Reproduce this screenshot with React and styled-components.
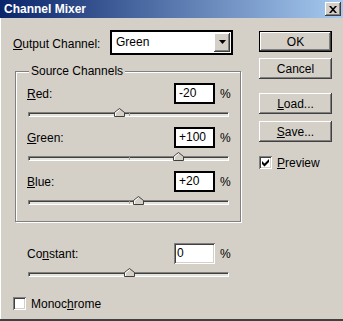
import React from 'react'
import styled, { createGlobalStyle } from 'styled-components'

const GlobalStyle = createGlobalStyle`
body{
    margin:0;
    font-family:"Liberation Sans", Arial, sans-serif;
    font-size:12px;
    color:#000;
}
`

const raised = `
box-shadow: inset -1px -1px #404040, inset 1px 1px #ffffff, inset -2px -2px #808080, inset 2px 2px #d4d0c8;
`
const sunken = `
box-shadow: inset 1px 1px #808080, inset -1px -1px #ffffff, inset 2px 2px #404040, inset -2px -2px #d4d0c8;
`

const channels = [
    { key: 'r', mnemonic: 'R', rest: 'ed:', value: -20 },
    { key: 'g', mnemonic: 'G', rest: 'reen:', value: 100 },
    { key: 'b', mnemonic: 'B', rest: 'lue:', value: 20 },
]

const fmt = v => (v > 0 ? '+' + v : String(v))

const Slider = ({ value }) => (
    <Track>
        <Tick />
        <Thumb style={{ left: `calc(${((value + 200) / 400) * 100}% - 5px)` }}>
            <svg width="11" height="9" viewBox="0 0 11 9">
                <path d="M0.5 8.5V4.5L5.5 0.5L10.5 4.5V8.5Z" fill="#d4d0c8" stroke="#404040" />
                <path d="M1.5 8V4.9L5.5 1.7" fill="none" stroke="#ffffff" />
            </svg>
        </Thumb>
    </Track>
)

const CheckBox = ({ checked }) => (
    <Box>
        {checked && (
            <svg width="9" height="9" viewBox="0 0 9 9">
                <path d="M1 3L3.5 5.5L8 1V4L3.5 8.5L1 6Z" fill="#000" />
            </svg>
        )}
    </Box>
)

export default () => {
    return (
        <>
            <GlobalStyle />
            <Window>
                <TitleBar>
                    <Title>Channel Mixer</Title>
                    <CloseButton>
                        <svg width="8" height="7" viewBox="0 0 8 7">
                            <path d="M0 0h2l2 2.2L6 0h2L5 3.5L8 7H6L4 4.8L2 7H0l3-3.5Z" fill="#000" />
                        </svg>
                    </CloseButton>
                </TitleBar>
                <Body>
                    <LeftCol>
                        <OutputRow>
                            <span><U>O</U>utput Channel:</span>
                            <Select>
                                <SelectText>Green</SelectText>
                                <DropButton>
                                    <svg width="7" height="4" viewBox="0 0 7 4">
                                        <path d="M0 0h7L3.5 4Z" fill="#000" />
                                    </svg>
                                </DropButton>
                            </Select>
                        </OutputRow>
                        <Group>
                            <Legend>Source Channels</Legend>
                            {channels.map(c => (
                                <Channel key={c.key}>
                                    <ValueRow>
                                        <Label><U>{c.mnemonic}</U>{c.rest}</Label>
                                        <NumberBox $strong>{fmt(c.value)}</NumberBox>
                                        <Percent>%</Percent>
                                    </ValueRow>
                                    <Slider value={c.value} />
                                </Channel>
                            ))}
                        </Group>
                        <ConstantBlock>
                            <ValueRow>
                                <Label>Co<U>n</U>stant:</Label>
                                <NumberBox>0</NumberBox>
                                <Percent>%</Percent>
                            </ValueRow>
                            <Slider value={0} />
                        </ConstantBlock>
                        <CheckRow $top={20}>
                            <CheckBox />
                            <span>Monoc<U>h</U>rome</span>
                        </CheckRow>
                    </LeftCol>
                    <RightCol>
                        <Button $default>OK</Button>
                        <Button $gap={6}>Cancel</Button>
                        <Button $gap={14}><U>L</U>oad...</Button>
                        <Button $gap={7}><U>S</U>ave...</Button>
                        <CheckRow $top={14}>
                            <CheckBox checked />
                            <span><U>P</U>review</span>
                        </CheckRow>
                    </RightCol>
                </Body>
            </Window>
        </>
    )
}

const Window = styled.div`
width:343px;
height:321px;
box-sizing:border-box;
background:#d4d0c8;
display:flex;
flex-direction:column;
border-bottom:2px solid #404040;
box-shadow: inset 1px 0 #ffffff;
`

const TitleBar = styled.div`
height:18px;
flex:none;
display:flex;
align-items:center;
justify-content:space-between;
padding:0 2px 0 4px;
background:linear-gradient(to right, #0a246a, #a6caf0);
`

const Title = styled.span`
color:#fff;
font-weight:bold;
font-size:12px;
`

const CloseButton = styled.div`
width:16px;
height:14px;
display:flex;
align-items:center;
justify-content:center;
background:#d4d0c8;
${raised}
`

const Body = styled.div`
display:flex;
flex:1;
`

const LeftCol = styled.div`
width:233px;
flex:none;
padding:12px 0 0 13px;
display:flex;
flex-direction:column;
`

const OutputRow = styled.div`
display:flex;
align-items:center;
justify-content:space-between;
height:24px;
width:220px;
span{ padding-top:3px; }
`

const Select = styled.div`
width:123px;
height:25px;
box-sizing:border-box;
border:2px solid #000;
background:#fff;
display:flex;
padding:1px;
`

const SelectText = styled.div`
flex:1;
padding-left:3px;
line-height:19px;
`

const DropButton = styled.div`
width:16px;
display:flex;
align-items:center;
justify-content:center;
background:#d4d0c8;
${raised}
`

const U = styled.span`
text-decoration:underline;
`

const Group = styled.div`
position:relative;
box-sizing:border-box;
margin:17px 0 0 2px;
width:226px;
border:1px solid #808080;
box-shadow: 1px 1px 0 #ffffff, inset 1px 1px 0 #ffffff;
padding:11px 0 16px 11px;
`

const Legend = styled.span`
position:absolute;
top:-8px;
left:13px;
padding:0 2px;
background:#d4d0c8;
`

const Channel = styled.div`
& + &{ margin-top:10px; }
`

const ValueRow = styled.div`
display:flex;
align-items:center;
height:21px;
`

const Label = styled.span`
width:147px;
flex:none;
`

const NumberBox = styled.div`
width:41px;
height:21px;
box-sizing:border-box;
background:#fff;
padding-left:3px;
line-height:${p => (p.$strong ? '17px' : '21px')};
${p => (p.$strong ? 'border:2px solid #000;' : sunken)}
`

const Percent = styled.span`
margin-left:5px;
`

const Track = styled.div`
position:relative;
margin:8px 0 0 1px;
width:201px;
height:5px;
box-sizing:border-box;
background:#e6e3dd;
border-top:1px solid #808080;
border-left:1px solid #808080;
border-bottom:1px solid #ffffff;
border-right:1px solid #ffffff;
box-shadow: inset 1px 1px #404040;
`

const Tick = styled.div`
position:absolute;
left:50%;
top:0;
width:1px;
height:3px;
background:#a0a0a0;
`

const Thumb = styled.div`
position:absolute;
top:-5px;
width:11px;
height:9px;
svg{ display:block; }
`

const ConstantBlock = styled.div`
margin:21px 0 0 14px;
`

const CheckRow = styled.div`
display:flex;
align-items:center;
gap:5px;
margin-top:${p => p.$top}px;
height:13px;
`

const Box = styled.div`
width:13px;
height:13px;
flex:none;
box-sizing:border-box;
background:#fff;
display:flex;
align-items:center;
justify-content:center;
${sunken}
`

const RightCol = styled.div`
padding:13px 0 0 13px;
display:flex;
flex-direction:column;
`

const Button = styled.div`
width:73px;
height:21px;
box-sizing:border-box;
margin-top:${p => p.$gap || 0}px;
display:flex;
align-items:center;
justify-content:center;
background:#d4d0c8;
${p => (p.$default
        ? 'border:1px solid #000; box-shadow: inset -1px -1px #404040, inset 1px 1px #ffffff, inset -2px -2px #808080;'
        : raised)}
`
